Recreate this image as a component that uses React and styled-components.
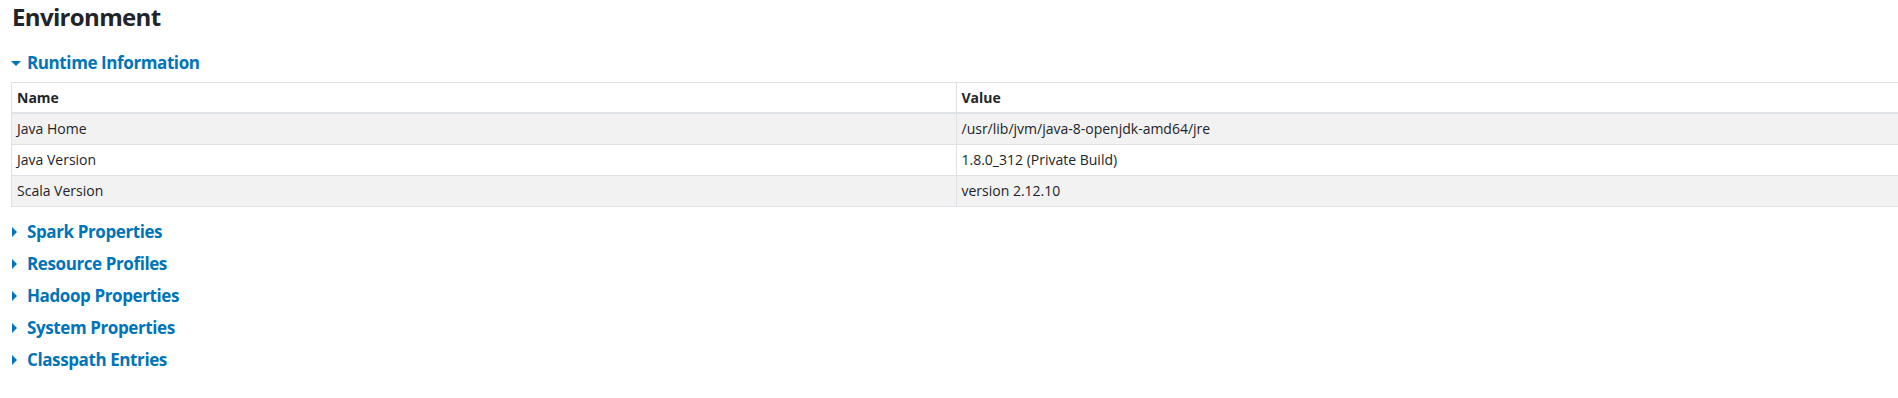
import React from 'react'
import styled, { createGlobalStyle } from 'styled-components'

const GlobalStyle = createGlobalStyle`
  body {
    margin: 0;
    background: #ffffff;
    overflow: hidden;
    font-family: 'Open Sans', 'Noto Sans', sans-serif;
    color: #212529;
  }
`

const Page = styled.div`
  padding: 0 0 0 11px;
`

const Title = styled.h3`
  margin: 0 0 12px 1px;
  font-size: 24px;
  font-weight: 700;
  line-height: 34px;
  letter-spacing: -0.65px;
  color: #212529;
`

const Section = styled.div`
  margin-bottom: 0;
`

const SectionHeader = styled.h4`
  box-sizing: border-box;
  display: flex;
  align-items: center;
  margin: 0;
  height: 32px;
  padding-top: 2px;
  font-size: 17px;
  font-weight: 700;
  line-height: 30px;
  letter-spacing: -0.4px;
  color: #0074b8;
  cursor: pointer;
`

const Arrow = styled.span`
  display: inline-block;
  width: 0;
  height: 0;
  ${(p) =>
    p.$open
      ? `
    border-left: 5px solid transparent;
    border-right: 5px solid transparent;
    border-top: 5px solid #0074b8;
    margin-right: 6px;
  `
      : `
    border-top: 5px solid transparent;
    border-bottom: 5px solid transparent;
    border-left: 5px solid #0074b8;
    margin-left: 1px;
    margin-right: 10px;
  `}
`

const TableWrap = styled.div`
  margin: 4px 0 8px 0;
`

const Table = styled.table`
  width: 1890px;
  border-collapse: collapse;
  font-size: 14px;
  border: 1px solid #dee2e6;
`

const Th = styled.th`
  width: 50%;
  padding: 4px 5px 3px;
  line-height: 22px;
  text-align: left;
  font-weight: 700;
  border-left: 1px solid #dee2e6;
  border-bottom: 2px solid #dee2e6;
`

const Row = styled.tr`
  background: ${(p) => (p.$striped ? '#f2f2f2' : '#ffffff')};
`

const Td = styled.td`
  padding: 4px 5px;
  line-height: 22px;
  color: #212529;
  border-left: 1px solid #dee2e6;
  border-top: 1px solid #dee2e6;
`

const runtime = [
  ['Java Home', '/usr/lib/jvm/java-8-openjdk-amd64/jre'],
  ['Java Version', '1.8.0_312 (Private Build)'],
  ['Scala Version', 'version 2.12.10'],
]

const collapsed = [
  'Spark Properties',
  'Resource Profiles',
  'Hadoop Properties',
  'System Properties',
  'Classpath Entries',
]

const App = () => {
  return (
    <Page>
      <GlobalStyle />
      <Title>Environment</Title>
      <Section>
        <SectionHeader>
          <Arrow $open />
          Runtime Information
        </SectionHeader>
        <TableWrap>
          <Table>
            <thead>
              <tr>
                <Th>Name</Th>
                <Th>Value</Th>
              </tr>
            </thead>
            <tbody>
              {runtime.map(([name, value], i) => (
                <Row key={name} $striped={i % 2 === 0}>
                  <Td>{name}</Td>
                  <Td>{value}</Td>
                </Row>
              ))}
            </tbody>
          </Table>
        </TableWrap>
      </Section>
      {collapsed.map((title) => (
        <Section key={title}>
          <SectionHeader>
            <Arrow />
            {title}
          </SectionHeader>
        </Section>
      ))}
    </Page>
  )
}

export default App
